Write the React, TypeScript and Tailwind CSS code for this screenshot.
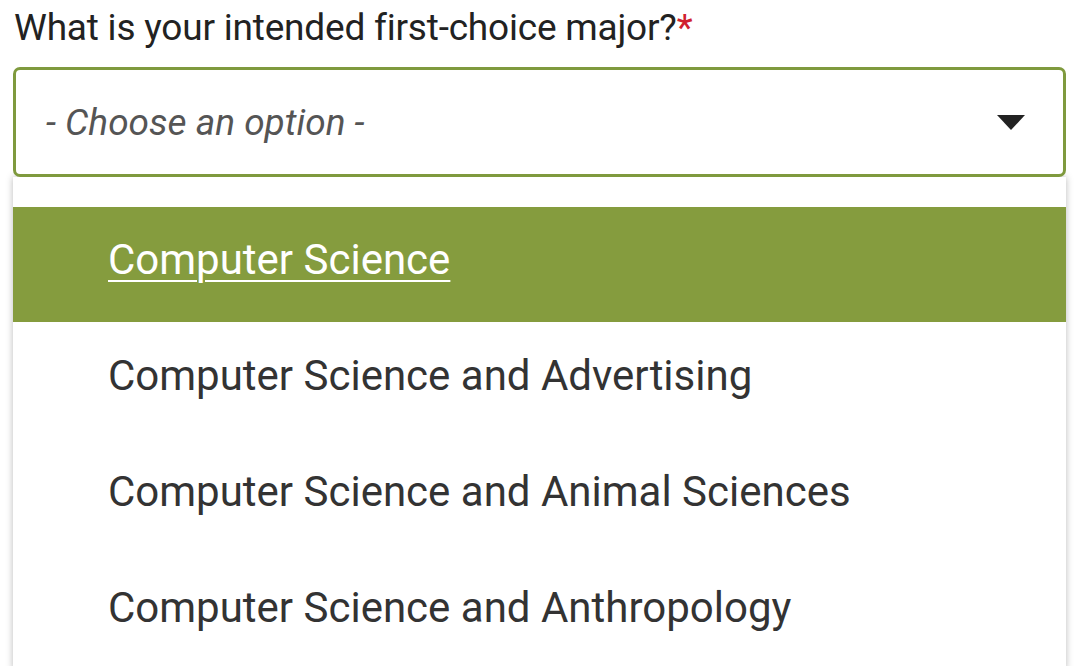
import React from 'react'

const options = [
  'Computer Science',
  'Computer Science and Advertising',
  'Computer Science and Animal Sciences',
  'Computer Science and Anthropology',
]

export default function App() {
  return (
    <div className="w-[1080px] h-[666px] overflow-hidden bg-white font-['Roboto','Liberation_Sans',sans-serif]">
      <div className="px-[13px] pt-[6px]">
        {/* Question label */}
        <label className="block text-[37px] leading-[44px] text-[#222] tracking-[-0.2px] mb-[17px] pl-[1px]">
          What is your intended first-choice major?<span className="text-[#d0202e]">*</span>
        </label>

        {/* Select box */}
        <div className="relative z-10 w-[1053px] h-[110px] border-[3px] border-[#7f9a3e] rounded-[7px] bg-white flex items-center justify-between pl-[30px] pr-[38px]">
          <span className="italic text-[37px] text-[#555] pt-[2px]">- Choose an option -</span>
          <svg width="28" height="15" viewBox="0 0 28 15">
            <path d="M0 0 L28 0 L14 15 Z" fill="#222" />
          </svg>
        </div>

        {/* Dropdown list */}
        <ul className="w-[1053px] bg-white pt-[30px] shadow-[0_0_7px_rgba(0,0,0,0.28)]">
          {options.map((opt, i) => (
            <li
              key={opt}
              className={
                i === 0
                  ? 'h-[115px] flex items-center pl-[95px] pb-[10px] bg-[#859c3e] text-white underline underline-offset-[6px] decoration-[2px] text-[42px]'
                  : 'h-[116px] flex items-center pl-[95px] pb-[10px] text-[#333] text-[42px]'
              }
            >
              {opt}
            </li>
          ))}
        </ul>
      </div>
    </div>
  )
}
